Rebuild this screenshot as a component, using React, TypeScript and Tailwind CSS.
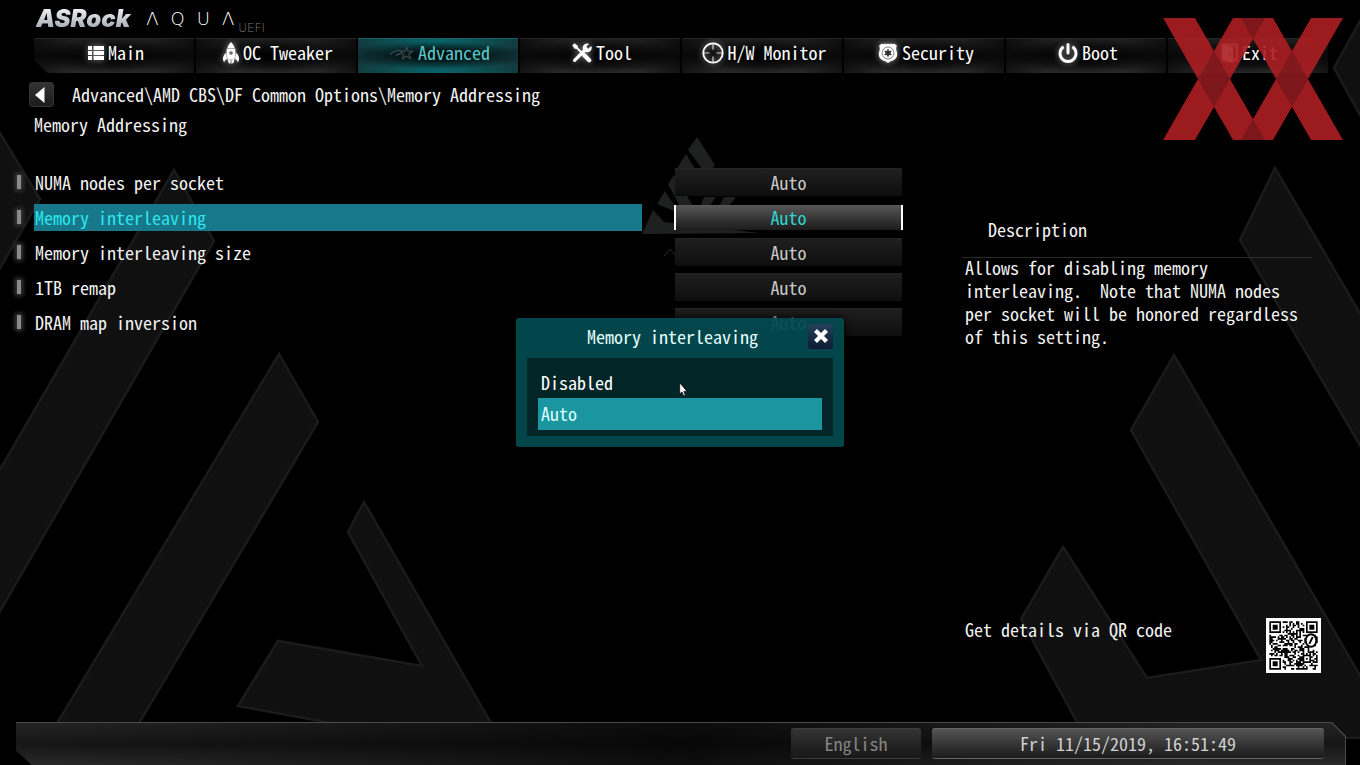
import React, { useState } from "react";

const rows = [
  "NUMA nodes per socket",
  "Memory interleaving",
  "Memory interleaving size",
  "1TB remap",
  "DRAM map inversion",
];

function ListIcon() {
  return (
    <svg className="h-4 w-4" viewBox="0 0 16 16" fill="currentColor" aria-hidden="true">
      {[1, 6, 11].map((y) => (
        <g key={y}>
          <rect x="0" y={y} width="4" height="4" />
          <rect x="5.5" y={y} width="10.5" height="4" />
        </g>
      ))}
    </svg>
  );
}

function RocketIcon() {
  return (
    <svg className="h-[22px] w-4" viewBox="0 0 16 22" aria-hidden="true">
      <path fill="currentColor" d="M8 0 Q5 2.800 4.400 6 L11.600 6 Q11 2.800 8 0Z" />
      <path
        fill="currentColor"
        fillRule="evenodd"
        d="M3.700 6.600h8.600q1 5.200-1 11H4.700Q2.700 11.800 3.700 6.600ZM8 9.200a1.800 1.800 0 1 0 0 3.600 1.800 1.800 0 0 0 0-3.600Z"
      />
      <path fill="currentColor" d="M3 10.800 Q-.4 13.500 0 17.500 L1 20.500 L3 17 L4.200 18Z" />
      <path fill="currentColor" d="M13 10.800 Q16.400 13.500 16 17.500 L15 20.500 L13 17 L11.800 18Z" />
      <path fill="currentColor" d="M4.600 17.500h3v4.300l-2-.8ZM8.400 17.500h3l-1 3.500-2 .8Z" />
    </svg>
  );
}

function ShootingStarIcon() {
  return (
    <svg className="h-4 w-6" viewBox="0 0 24 16" fill="none" stroke="#3a484a" strokeWidth="1.300" aria-hidden="true">
      <path d="M16.500 2 L18 6.200 L22.600 6.300 L19 9 L20.400 13.600 L16.300 11 L12.600 13.600 L13.700 9.200 L11 6.600 L15 6.200Z" />
      <path d="M0 9.500 Q4 5.500 11 5.300M6 10.500 Q8.500 8.600 11.500 8.500" />
    </svg>
  );
}

function ToolsIcon() {
  return (
    <svg className="h-5 w-5" viewBox="0 0 20 20" aria-hidden="true">
      <path stroke="currentColor" strokeWidth="3.200" strokeLinecap="round" d="M2.600 17.400 L13 7" />
      <path
        fill="currentColor"
        d="M17.200.8 L14.200 3.800 L16.200 5.800 L19.300 2.900 Q20.500 6 18.200 8.200 Q16.200 10 13.400 9 L11 6.600 Q10 3.800 12 1.800 Q14.200 -.3 17.200.8Z"
      />
      <path stroke="currentColor" strokeWidth="1.800" d="M3 3 L11 11" />
      <path fill="currentColor" d="M.3 2.400 L2.400.3 L5.800 2.700 L5.900 4.400 L4.400 5.900 L2.700 5.800Z" />
      <path stroke="currentColor" strokeWidth="4.200" strokeLinecap="round" d="M12.300 12.300 L17.200 17.200" />
    </svg>
  );
}

function CrosshairIcon() {
  return (
    <svg className="h-[22px] w-[22px]" viewBox="0 0 22 22" fill="none" stroke="currentColor" aria-hidden="true">
      <circle cx="11" cy="11" r="9.700" strokeWidth="1.800" />
      <path strokeWidth="1.200" opacity="0.8" d="M11 2v5.500M11 14.500V20M2 11h5.500M14.500 11H20" />
    </svg>
  );
}

function BadgeIcon() {
  return (
    <svg className="h-5 w-5" viewBox="0 0 20 20" aria-hidden="true">
      <path
        fill="currentColor"
        d="M1 2.500 Q2.500 2.300 3.200.5 Q5 1.700 6.600.5 Q8.500 1.800 10 .5 Q11.500 1.800 13.400.5 Q15 1.700 16.800.5 Q17.500 2.300 19 2.500 Q17.600 5 18.600 8 Q20.600 14 16 17 Q12.500 18.200 10 20 Q7.500 18.200 4 17 Q-.6 14 1.400 8 Q2.400 5 1 2.500Z"
      />
      <circle cx="10" cy="10" r="6" fill="none" stroke="#666" strokeWidth="0.800" />
      <path
        fill="#333"
        d="M10 5.500 L11.200 7.900 L13.900 7.800 L12.400 10 L13.900 12.200 L11.200 12.100 L10 14.500 L8.800 12.100 L6.100 12.200 L7.600 10 L6.100 7.800 L8.800 7.900Z"
      />
    </svg>
  );
}

function PowerIcon() {
  return (
    <svg className="h-5 w-5" viewBox="0 0 20 20" fill="none" stroke="currentColor" aria-hidden="true">
      <path strokeWidth="2.900" d="M5.600 3.800 A8 8 0 1 0 14.400 3.800" />
      <path strokeWidth="3" strokeLinecap="round" d="M10 1.600 V10" />
    </svg>
  );
}

function DoorIcon() {
  return (
    <svg className="h-5 w-4" viewBox="0 0 16 20" aria-hidden="true">
      <path fill="none" stroke="currentColor" strokeWidth="1.500" d="M3 1.500 H15 V17 H11" />
      <path fill="currentColor" fillRule="evenodd" d="M0 1 L11 4 V20 L0 17ZM7.500 10v3l1.500.4v-3Z" />
    </svg>
  );
}

const tabs = [
  { label: "Main", Icon: ListIcon },
  { label: "OC Tweaker", Icon: RocketIcon },
  { label: "Advanced", Icon: ShootingStarIcon },
  { label: "Tool", Icon: ToolsIcon },
  { label: "H/W Monitor", Icon: CrosshairIcon },
  { label: "Security", Icon: BadgeIcon },
  { label: "Boot", Icon: PowerIcon },
  { label: "Exit", Icon: DoorIcon },
];

function Backdrop() {
  return (
    <svg
      className="pointer-events-none absolute inset-0 h-full w-full"
      viewBox="0 0 1360 765"
      preserveAspectRatio="xMidYMid slice"
      aria-hidden="true"
    >
      <g fill="#101010" stroke="#1b1b1b" strokeWidth="2.500">
        <path d="M-5 125 L40 199 L-5 277Z" />
        <path d="M174 170 L214 241 L-5 620 L-5 478Z" />
        <path d="M279 354 L318 422 L135 730 L53 730Z" />
        <path d="M364 502 L495 730 L370 730 L238 706 L278 641 L422 666 L348 532Z" />
        <path d="M1365 12 L1334 68 L1365 124Z" />
        <path d="M1275 168 L1240 240 L1365 454 L1365 322Z" />
        <path d="M1174 355 L1131 430 L1261 660 L1147 678 L1063 547 L1021 619 L1084 735 L1365 738 L1365 684Z" />
      </g>
      <g fill="#1f2020">
        <path d="M697 137 L715 165 L711 170 L703 170 L688 150Z" />
        <path d="M686 154 L696 170 L676 170Z" />
        <path d="M674 175 L698 214 L684 214 L668 184Z" />
        <path d="M665 191 L680 214 L672 210 L657 204Z" />
        <path d="M653 210 L664 222 L760 233 L642 234Z" />
        <path d="M704 197 H716 L709 207 H700Z M724 197 H736 L728 207 H719Z" />
      </g>
      <path d="M664 256 L670 249 L676 256" fill="none" stroke="#2a2a2a" />
    </svg>
  );
}

const QR_SIZE = 29;

function isDark(x: number, y: number): boolean {
  const finders = [
    [0, 0],
    [QR_SIZE - 7, 0],
    [0, QR_SIZE - 7],
  ];
  for (const [fx, fy] of finders) {
    const dx = x - fx;
    const dy = y - fy;
    if (dx >= -1 && dx <= 7 && dy >= -1 && dy <= 7) {
      const ring = Math.max(Math.abs(dx - 3), Math.abs(dy - 3));
      return ring === 3 || ring <= 1;
    }
  }
  const align = Math.max(Math.abs(x - 22), Math.abs(y - 22));
  if (align <= 2) return align !== 1;
  if (x === 6 || y === 6) return (x + y) % 2 === 0;
  const n = Math.sin(x * 127.1 + y * 311.7) * 43758.5453;
  return n - Math.floor(n) < 0.52;
}

function QrCode() {
  let d = "";
  for (let y = 0; y < QR_SIZE; y++) {
    for (let x = 0; x < QR_SIZE; x++) {
      if (isDark(x, y)) d += `M${x + 2} ${y + 2}h1v1h-1z`;
    }
  }
  return (
    <svg className="h-[55px] w-[55px] shrink-0" viewBox="0 0 33 33" role="img" aria-label="QR code">
      <rect width="33" height="33" fill="#fff" />
      <path d={d} fill="#000" />
      <ellipse cx="27" cy="13.500" rx="3.200" ry="3.800" fill="#fff" stroke="#000" strokeWidth="1.200" />
      <path d="M26 15.500 L28 11.500" stroke="#000" strokeWidth="1.200" />
    </svg>
  );
}

function LuxxMark() {
  return (
    <svg
      className="pointer-events-none absolute top-[18px] right-[17px] h-[122px] w-[180px] opacity-90"
      viewBox="0 0 180 122"
      aria-hidden="true"
    >
      <g fill="#ac1e22">
        <path d="M0 0H32L102 122H70Z" />
        <path d="M70 0H102L32 122H0Z" />
        <path d="M78 0H110L180 122H148Z" />
        <path d="M148 0H180L110 122H78Z" />
      </g>
      <g fill="#8c1a1e">
        <path d="M51 33L67 61L51 89L35 61Z" />
        <path d="M129 33L145 61L129 89L113 61Z" />
        <path d="M78 0H102L90 21Z" />
        <path d="M78 122H102L90 101Z" />
      </g>
    </svg>
  );
}

function Header() {
  return (
    <header className="relative">
      <div className="flex h-[38px] items-start pt-1 pl-9" aria-label="ASRock AQUA UEFI">
        <span className="bg-gradient-to-b from-white via-[#c9ccd2] to-[#8f98ab] bg-clip-text pr-1 font-['Inter'] text-[24px] leading-[30px] font-black text-transparent italic">
          ASRock
        </span>
        <span
          className="ml-3 flex gap-3 font-['DejaVu_Sans'] text-[18px] leading-[30px] font-extralight text-white"
          aria-label="AQUA"
        >
          <span>Λ</span>
          <span>Q</span>
          <span>U</span>
          <span>Λ</span>
        </span>
        <span className="mt-4 ml-1 font-['DejaVu_Sans'] text-[12px] leading-4 font-extralight text-[#7a7a7a]">
          UEFI
        </span>
      </div>
      <nav className="mr-8 ml-[34px] flex gap-0.5 [clip-path:polygon(0_0,100%_0,100%_100%,14px_100%,0_22px)]">
        {tabs.map(({ label, Icon }) => {
          const active = label === "Advanced";
          return (
            <button
              key={label}
              type="button"
              aria-current={active ? "page" : undefined}
              className={
                "flex h-[35px] flex-1 items-center justify-center gap-1 border-t pb-[7px] pl-1 whitespace-nowrap " +
                (active
                  ? "border-[#1d6065] bg-[#12393c] bg-[radial-gradient(ellipse_60%_40%_at_50%_48%,#021012_25%,transparent),radial-gradient(ellipse_55%_60%_at_50%_0%,#08666c,transparent),radial-gradient(ellipse_55%_60%_at_50%_100%,#08666c,transparent)] text-[#5cc9cb]"
                  : "border-[#262626] bg-black bg-[radial-gradient(ellipse_50%_50%_at_50%_50%,#000_10%,transparent),linear-gradient(to_right,#0008,transparent_25%,transparent_75%,#0008),linear-gradient(#1f1f1f,#101010_50%,#2a2a2a)] text-white")
              }
            >
              <span className={active ? "" : "drop-shadow-[0_0_3px_rgba(255,255,255,0.55)]"}>
                <Icon />
              </span>
              {label}
            </button>
          );
        })}
      </nav>
    </header>
  );
}

function SettingRow({ label, selected }: { label: string; selected: boolean }) {
  const id = label.replace(/\s+/g, "-").toLowerCase();
  return (
    <li className="flex h-7 items-center">
      <span className="flex w-5 shrink-0 pl-[3px]" aria-hidden="true">
        <span className="h-3.5 w-1 bg-[#8a8a8a] shadow-[0_0_4px_2px_#3c3c3c]" />
      </span>
      <label
        htmlFor={id}
        className={
          "mr-8 flex-1 pl-px leading-[27px] whitespace-nowrap " +
          (selected ? "bg-[#16788a] text-[#2ee6ee]" : "text-[#f2f2f2]")
        }
      >
        {label}
      </label>
      <span className="flex w-[229px] justify-center">
        <button
          id={id}
          type="button"
          className={
            selected
              ? "h-[25px] w-full border-x-2 border-white bg-gradient-to-b from-[#595959] to-[#1c1c1c] text-[#2fd4cf]"
              : "h-7 w-[227px] border-t border-[#242424] bg-gradient-to-b from-[#1f1f1f] to-[#0e0e0e] text-[#c8c8c8]"
          }
        >
          Auto
        </button>
      </span>
    </li>
  );
}

function OptionDialog({ onClose }: { onClose: () => void }) {
  return (
    <div className="pointer-events-none absolute inset-0 flex items-center justify-center">
      <div
        role="dialog"
        aria-label="Memory interleaving"
        className="pointer-events-auto relative w-[328px] rounded-[3px] bg-[#024a50]/95 px-[11px] pb-[11px] shadow-[0_0_8px_#000]"
      >
        <div className="flex h-10 items-center pb-1">
          <h2 className="flex-1 pl-2.5 text-center text-[#e6ffff]">Memory interleaving</h2>
          <button
            type="button"
            aria-label="Close"
            onClick={onClose}
            className="flex h-[25px] w-[25px] items-center justify-center rounded-[3px] bg-gradient-to-b from-[#24405c] to-[#0d1c30] text-white"
          >
            <svg className="h-4 w-4" viewBox="0 0 16 16" aria-hidden="true">
              <path d="M2.500 2.500 L13.500 13.500 M13.500 2.500 L2.500 13.500" stroke="currentColor" strokeWidth="4.200" />
            </svg>
          </button>
        </div>
        <div role="listbox" aria-label="Memory interleaving" className="bg-[#022627] px-[11px] pt-2 pb-1.5">
          <button
            type="button"
            role="option"
            aria-selected="false"
            className="block h-8 w-full pl-[3px] text-left text-white"
          >
            Disabled
          </button>
          <button
            type="button"
            role="option"
            aria-selected="true"
            className="block h-8 w-full bg-[#1b96a1] pb-0.5 pl-[3px] text-left text-[#d8ffff]"
          >
            Auto
          </button>
        </div>
        <svg className="absolute top-16 left-[163px] h-4 w-2.5" viewBox="0 0 10 16" aria-hidden="true">
          <path
            d="M.7.7 V12 L3 9.900 L4.700 14 L6.400 13.200 L4.800 9.400 H8Z"
            fill="#fff"
            stroke="#000"
            strokeWidth="0.700"
          />
        </svg>
      </div>
    </div>
  );
}

export default function App() {
  const [open, setOpen] = useState(true);
  return (
    <div className="relative flex min-h-screen flex-col overflow-hidden bg-black font-['Noto_Sans_Mono_CJK_SC','Noto_Sans_Mono_CJK_JP','Liberation_Mono',monospace] text-[18px] leading-[23px] text-[#f2f2f2]">
      <Backdrop />
      <Header />
      <div className="relative flex items-center pt-[9px] pl-[29px]">
        <button
          type="button"
          aria-label="Back"
          className="flex h-[25px] w-[25px] items-center justify-center rounded-[3px] border border-[#333] bg-gradient-to-b from-[#333] to-[#1c1c1c] pr-1"
        >
          <svg className="h-4 w-2.5" viewBox="0 0 10 16" aria-hidden="true">
            <path d="M0 8 L9.500 0 V16Z" fill="#fff" />
          </svg>
        </button>
        <span className="ml-[18px]">Advanced\AMD CBS\DF Common Options\Memory Addressing</span>
      </div>
      <main className="relative grid flex-1 grid-cols-[minmax(0,1fr)_350px] gap-x-[59px] pr-12">
        <section className="pt-1.5 pl-3.5">
          <h1 className="pl-5">Memory Addressing</h1>
          <ul className="mt-8 flex flex-col gap-[7px]">
            {rows.map((label) => (
              <SettingRow key={label} label={label} selected={label === "Memory interleaving"} />
            ))}
          </ul>
        </section>
        <aside className="flex flex-col pt-[111px]">
          <h2 className="border-b border-[#2b2b2b] pb-4 pl-[26px]">Description</h2>
          <p className="-mt-0.5 pl-[3px] whitespace-pre-wrap">
            {"Allows for disabling memory\ninterleaving.  Note that NUMA nodes\nper socket will be honored regardless\nof this setting."}
          </p>
          <div className="mt-auto -mr-[9px] mb-[49px] flex items-start justify-between pl-[3px]">
            <span>Get details via QR code</span>
            <QrCode />
          </div>
        </aside>
      </main>
      <footer className="relative mr-3.5 ml-4 bg-[#4a4a4a] pt-px [clip-path:polygon(0_0,calc(100%-14px)_0,100%_14px,100%_100%,16px_100%,0_28px)]">
        <div className="flex h-[42px] items-start justify-end gap-[11px] bg-[#181818] bg-[linear-gradient(to_right,transparent,#000a_50%,transparent_90%),linear-gradient(#242424,#161616_50%,#2a2a2a)] pt-[5px] pr-[22px] [clip-path:polygon(0_0,calc(100%-15px)_0,calc(100%-1px)_14px,calc(100%-1px)_100%,0_100%)]">
          <button
            type="button"
            className="h-[31px] w-[130px] rounded-[3px] border-y border-[#3d3d3d] bg-gradient-to-b from-[#333] to-[#181818] text-[#858585]"
          >
            English
          </button>
          <div className="flex h-[31px] w-[392px] items-center justify-center rounded-[3px] border-y border-[#666] bg-gradient-to-b from-[#555] to-[#1b1b1b] text-[#d0d0d0]">
            <time dateTime="2019-11-15T16:51:49">Fri 11/15/2019, 16:51:49</time>
          </div>
        </div>
      </footer>
      {open && <OptionDialog onClose={() => setOpen(false)} />}
      <LuxxMark />
    </div>
  );
}
